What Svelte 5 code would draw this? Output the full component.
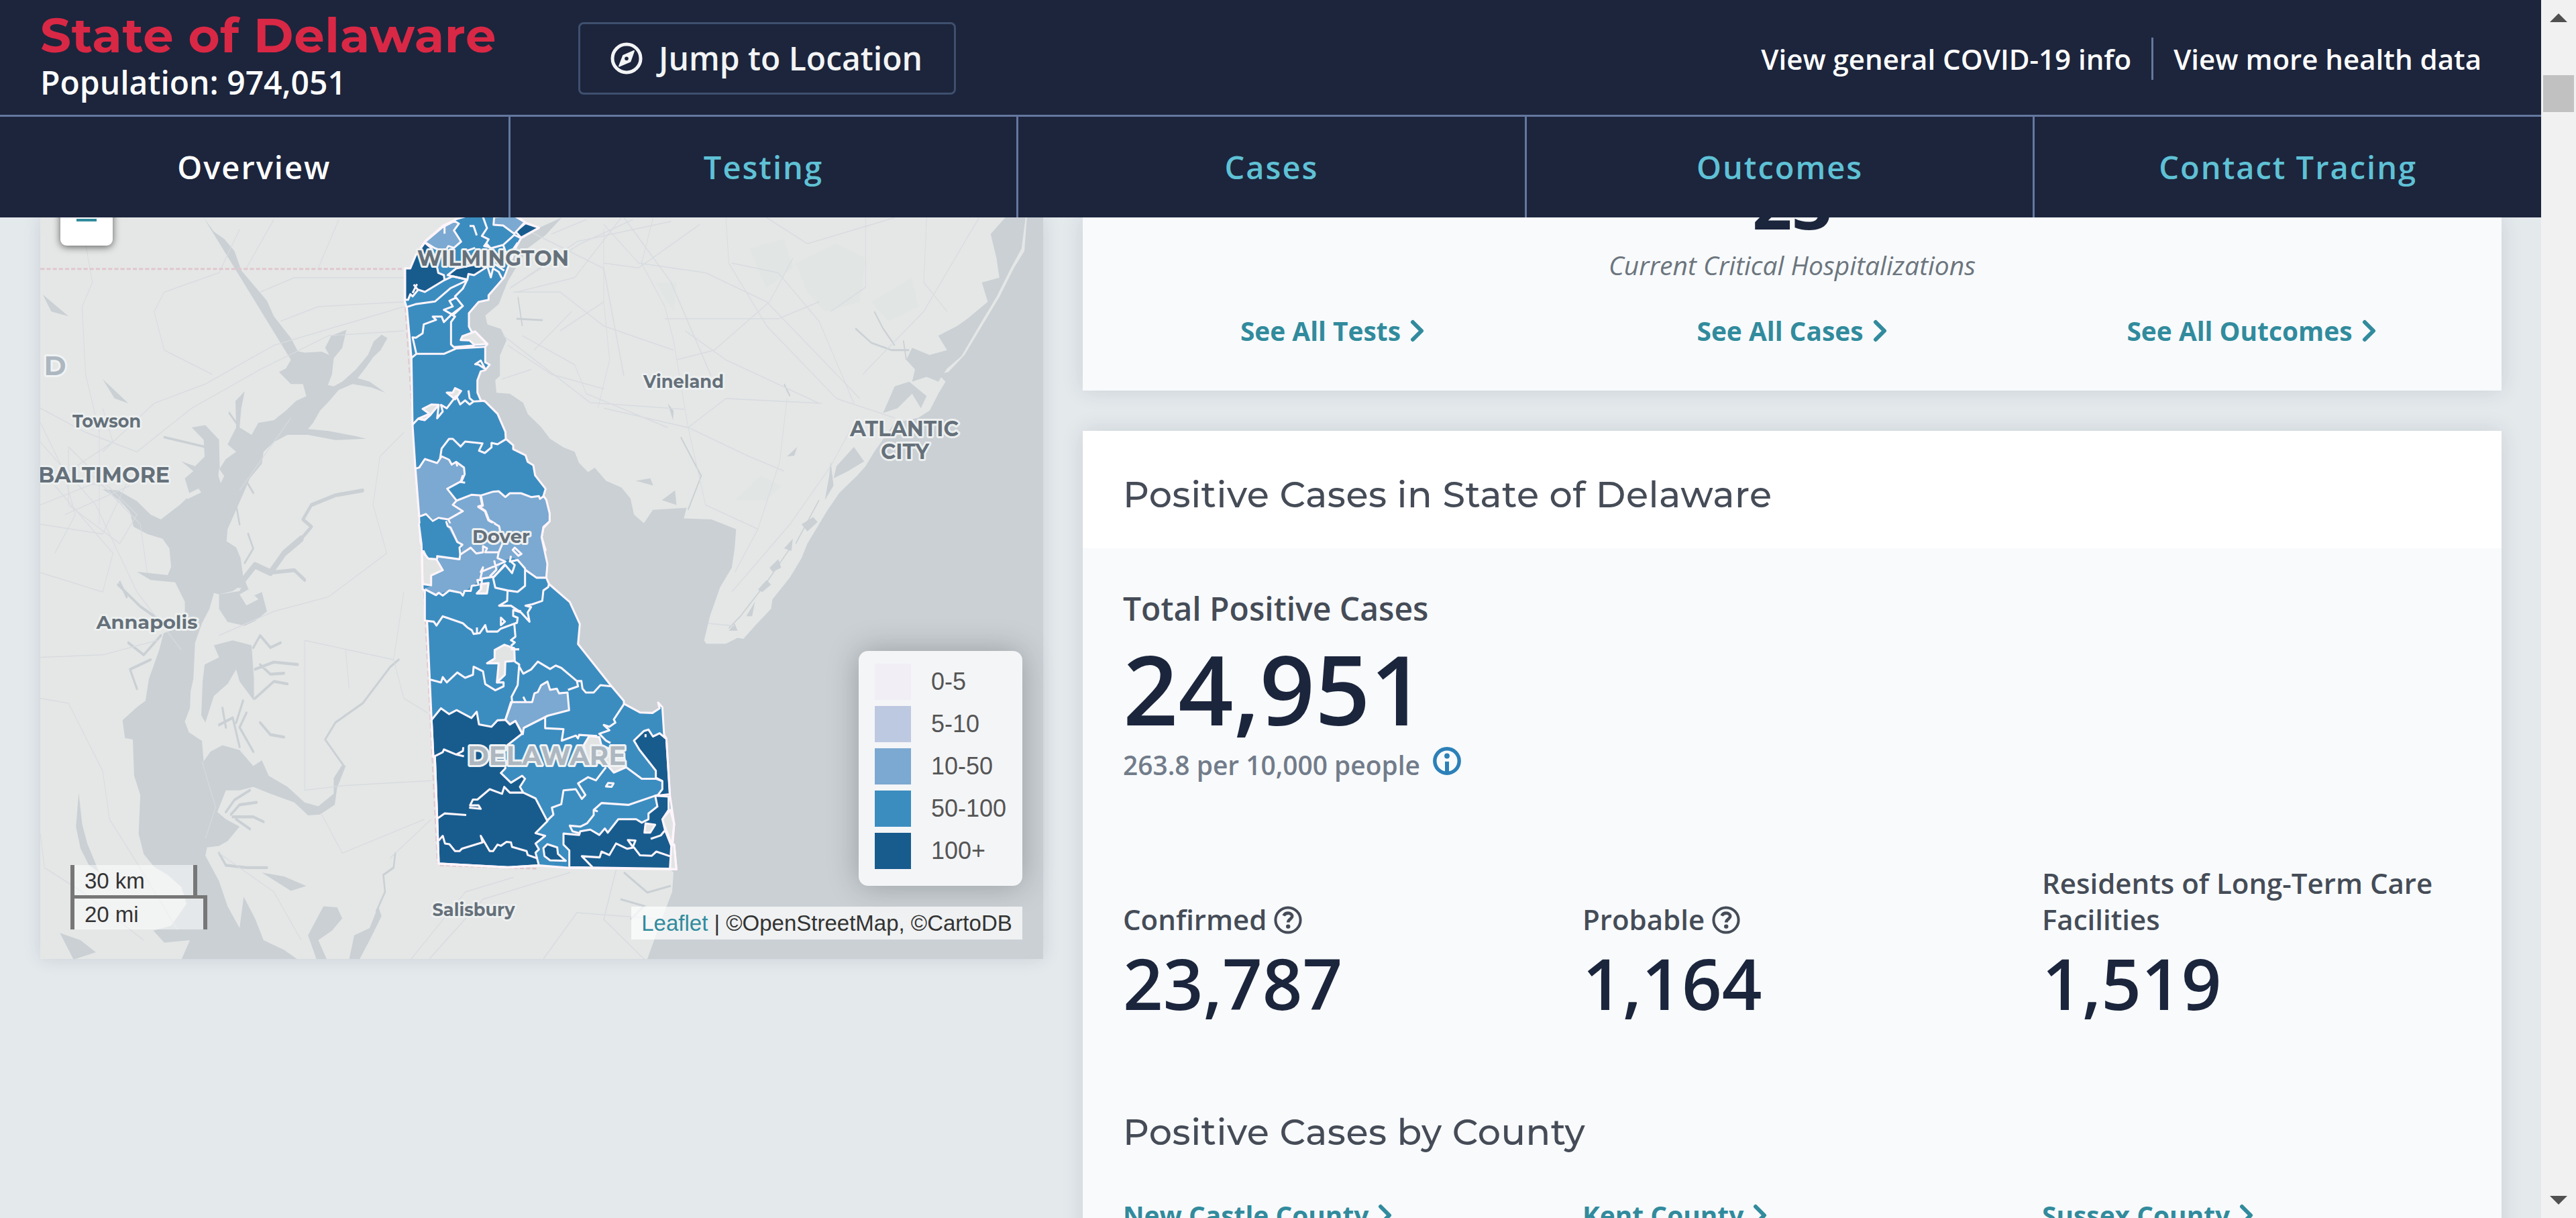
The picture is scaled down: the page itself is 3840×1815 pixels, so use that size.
<script>
  const tabs = ['Overview', 'Testing', 'Cases', 'Outcomes', 'Contact Tracing'];
  const summaryLinks = ['See All Tests', 'See All Cases', 'See All Outcomes'];
  const stats = [
    { label: 'Confirmed', value: '23,787', help: true },
    { label: 'Probable', value: '1,164', help: true },
    { label: 'Residents of Long-Term Care Facilities', value: '1,519', help: false }
  ];
  const counties = ['New Castle County', 'Kent County', 'Sussex County'];
  const legend = [
    { label: '0-5', tone: 't0' },
    { label: '5-10', tone: 't1' },
    { label: '10-50', tone: 't2' },
    { label: '50-100', tone: 't3' },
    { label: '100+', tone: 't4' }
  ];
</script>

{#snippet chevron()}
  <svg class="chevron" viewBox="0 0 22 34"><path d="M4 4 L17 17 L4 30" /></svg>
{/snippet}

<div class="screen">
  <div class="page">
    <header>
      <div class="top">
        <div class="place">
          <h1>State of Delaware</h1>
          <p>Population: 974,051</p>
        </div>
        <button class="jump">
          <svg viewBox="0 0 48 48">
            <circle cx="24" cy="24" r="21" fill="none" stroke="#f3f4f5" stroke-width="5" />
            <path fill="#f3f4f5" stroke="#f3f4f5" stroke-width="2" stroke-linejoin="round" d="M35 13 L29.5 28.5 L13 35.5 L19 20 Z" />
            <circle cx="24" cy="24.2" r="2.8" fill="#1c253c" />
          </svg>
          <span>Jump to Location</span>
        </button>
        <div class="links">
          <a class="info">View general COVID-19 info</a>
          <i></i>
          <a class="more">View more health data</a>
        </div>
      </div>
      <nav>
        {#each tabs as tab, i}
          <a class:active={i === 0}>{tab}</a>
        {/each}
      </nav>
    </header>

    <main>
      <section class="map">
        <svg class="tiles" viewBox="60 324 1495 1105" preserveAspectRatio="none">
          <rect x="60" y="324" width="1495" height="1105" fill="#e5e7e6" />

          <!-- Chesapeake Bay and its tributaries -->
          <g transform="translate(0 320) scale(.5102 .7207)">
            <g fill="#cad0d4">
              <path d="M595 6 L625 35 L655 50 L685 75 L705 115 L735 140 L780 178 L800 210 L850 255 L870 282 L890 285 L940 283 L962 290 L950 275 L968 250 L1012 238 L1000 275 L975 297 L970 330 L958 352 L975 355 L1000 345 L1040 320 L1075 290 L1092 262 L1115 248 L1132 255 L1112 280 L1090 295 L1070 315 L1045 338 L1080 345 L1126 368 L1085 357 L1030 350 L990 362 L958 388 L935 405 L915 430 L900 443 L960 447 L1040 458 L1070 463 L980 466 L900 455 L840 455 L800 470 L770 490 L765 515 L730 545 L715 570 L690 610 L665 650 L662 675 L690 688 L703 710 L710 745 L708 765 L680 778 L640 785 L625 782 L612 815 L590 845 L570 885 L565 960 L557 985 L555 1020 L540 1048 L552 1070 L590 1088 L595 1130 L615 1110 L650 1097 L700 1107 L740 1140 L765 1128 L785 1160 L840 1183 L890 1215 L930 1223 L975 1197 L975 1165 L1000 1137 L1010 1140 L985 1185 L978 1220 L935 1240 L900 1242 L860 1215 L790 1197 L740 1183 L700 1190 L660 1190 L635 1235 L660 1250 L700 1265 L665 1295 L640 1305 L605 1308 L600 1325 L640 1378 L665 1430 L700 1475 L712 1410 L745 1455 L770 1500 L830 1520 L870 1540 L530 1540 L555 1500 L480 1505 L448 1480 L500 1470 L545 1425 L530 1390 L490 1365 L450 1348 L420 1322 L405 1280 L410 1200 L392 1160 L388 1085 L365 1082 L358 1045 L400 1018 L425 1005 L435 960 L465 900 L478 865 L540 850 L540 800 L512 760 L440 755 L400 738 L490 745 L500 728 L495 690 L475 670 L430 660 L390 645 L380 615 L350 590 L300 568 L345 570 L400 592 L440 620 L470 630 L525 600 L555 580 L540 545 L565 530 L530 510 L570 520 L598 500 L595 465 L560 440 L600 435 L640 465 L642 525 L660 505 L690 490 L665 475 L690 440 L688 385 L715 365 L705 400 L700 440 L735 455 L755 430 L800 425 L835 405 L865 385 L895 375 L885 350 L850 350 L815 325 L835 318 L850 300 Z" />
              <path d="M592 965 L598 930 L640 915 L625 890 L680 880 L735 890 L742 960 L742 1005 L700 965 L690 940 L665 970 L625 995 L600 1050 L588 1035 Z" />
              <path d="M640 785 L700 778 L715 755 L735 790 L765 780 L780 820 L745 840 L715 850 L665 842 L640 815 Z" />
              <path d="M900 1490 L945 1430 L985 1432 L1000 1455 L970 1480 L930 1500 L955 1540 L925 1540 Z M1020 1540 L1035 1490 L1080 1475 L1105 1430 L1115 1450 L1080 1500 L1050 1540 Z M765 1360 L830 1368 L895 1388 L850 1398 Z" />
              <path d="M230 1195 L240 1260 L255 1300 L290 1360 L260 1345 L235 1310 L222 1265 Z M125 165 L200 210 L150 200 Z M300 340 L375 390 L335 380 Z M175 1485 L235 1500 L280 1525 L215 1540 Z" />
            </g>
            <g fill="none" stroke="#cad0d4" stroke-width="8" stroke-linejoin="round" stroke-linecap="round">
              <path stroke-width="14" d="M700 765 L745 725 L790 740 L830 700 L880 670" />
              <path d="M790 740 L860 735 L890 755 M880 670 L910 645 L885 630 L910 600 L980 580 L1060 570" />
              <path stroke-width="6" d="M740 895 L760 870 L790 895 L820 885 M745 940 L800 925 L870 930 M760 930 L790 950 L830 948 M745 1000 L800 965 L840 970 M700 1100 L680 1040 L640 1055 M740 1110 L700 1060 L720 1030 M760 1050 L790 1075 L830 1080 M660 1060 L650 1020 M690 1050 L710 1005" />
              <path stroke-width="5" d="M1005 1140 L950 1085 L980 1050 L1060 1010 L1140 935 L1165 920" />
              <path stroke-width="6" d="M470 870 L420 910 L375 885 M440 920 L380 940 L400 980 M470 840 L410 810 L345 765 M370 790 L350 760 M660 1235 L685 1210 L730 1190 M675 1240 L700 1220 L750 1215 M680 1245 L740 1245 L770 1255 M690 1250 L730 1270 M640 1320 L660 1345 L720 1350 L780 1350" />
              <path stroke-width="5" d="M1155 1320 L1150 1350 L1120 1365 L1125 1400 L1100 1440 M690 430 L670 410 M715 545 L740 575 M480 460 L600 480 M700 640 L690 600 M715 720 L740 690 L725 660" />
            </g>
            <g fill="#e5e7e6">
              <path d="M540 580 L580 566 L588 574 L548 588 Z M700 785 L725 775 L755 795 L720 808 Z M640 525 L655 540 L645 555 L638 540 Z" />
            </g>
            <g fill="none" stroke="#d8dbe0" stroke-width="2">
              <path d="M250 60 L270 140 L240 190 L250 330 L290 450 M118 400 L250 450 L400 490 L560 400 L760 320 L960 250 L1180 240 M300 490 L450 390 L600 350 L800 270 L1180 190 M118 540 L300 560 L410 640 L430 740 M118 470 L280 600 L400 780 L530 900 M118 640 L300 660 L380 540 M160 560 L330 700 L300 780 L118 740 M118 915 L300 910 L460 880 M118 1000 L200 1010 L300 1150 L320 1250 L400 1340 L520 1480 M700 570 L850 420 M450 200 L480 160 L640 120 L700 30 M450 200 L480 280 L620 330 M1180 450 L1110 500 L1090 600 L1130 700 L960 790 L800 820 L640 870 M890 880 L890 1190 M890 880 L1150 920 M720 110 L800 10 M760 160 L860 130 L1180 130 M820 220 L930 190 L1180 180 M930 110 L990 10 M890 1190 L1010 1180 L1260 1170 M940 1240 L1000 1320 L1240 1250 M1180 780 L1150 920 L1180 1000 L1250 1030 M118 1280 L130 1350 L240 1400 L420 1500 M640 1320 L800 1400 L880 1500 M1010 900 L1020 980 M1140 1330 L1260 1250 M590 1130 L630 1225 L600 1290 M1200 1540 L1360 1400 L1500 1370 M180 540 L330 470 L300 400 M118 430 L180 520 L220 620 L160 700" />
              <path d="M200 480 L400 620 L350 680 L200 600 Z M240 520 L360 600 M190 620 L380 560 M118 600 L330 540 M290 430 L290 640" />
            </g>
            <g fill="none" stroke="#dfc8ce" stroke-width="4" stroke-dasharray="12 6">
              <path d="M118 112 L1185 112 M1184 190 L1240 800 L1278 1340 M1285 1345 L1568 1352" />
            </g>
          </g>

          <!-- Delaware Bay and the Atlantic -->
          <path fill="#cad0d4" d="M838 324 L780 350 L750 400 L690 450 L700 560 L760 680 L790 780 L800 860 L840 970 L900 1030 L930 1060 L960 1100 L980 1280 L1004 1300 L1002 1329 L987 1368 L965 1429 H1555 V324 Z" />
          <g transform="translate(900 320) scale(.43365 .7207)">
            <path fill="#e5e7e6" d="M-138 2 L-200 42 L-261 69 L-308 116 L-331 139 L-361 185 L-407 208 L-400 227 L-354 236 L-334 259 L-357 291 L-357 333 L-373 342 L-369 368 L-323 370 L-277 389 L-261 412 L-215 439 L-185 463 L-138 481 L-100 490 L-85 513 L-54 532 L-31 523 L8 550 L61 564 L92 587 L104 620 L138 638 L169 610 L285 606 L275 628 L370 630 L455 650 L450 690 L440 730 L400 770 L365 830 L345 880 L352 887 L420 887 L460 875 L480 877 L520 850 L575 815 L580 795 L640 750 L680 710 L700 680 L770 610 L810 575 L870 540 L900 520 L930 490 L1000 430 L1080 420 L1120 405 L1150 370 L1175 345 L1150 330 L1185 325 L1240 290 L1300 230 L1360 170 L1410 110 L1446 75 L1455 2 Z" />
            <g fill="#cad0d4">
              <path d="M1380 6 L1330 40 L1350 90 L1360 130 L1300 140 L1320 180 L1250 215 L1215 230 L1150 250 L1180 280 L1120 290 L1060 275 L1040 300 L1070 320 L1060 345 L1110 335 L1150 345 L1180 318 L1230 292 L1290 230 L1350 170 L1400 110 L1436 70 L1450 6 Z" />
              <path d="M1050 345 L1000 355 L960 410 L1010 400 L1060 370 L1090 400 L1110 375 Z M800 520 L860 480 L895 510 L840 530 L790 545 Z M680 640 L720 625 L735 635 L700 655 Z M620 690 L650 670 L645 695 Z M570 730 L600 712 L610 730 L580 738 Z M530 775 L560 755 L575 765 L545 780 Z M490 830 L520 800 L510 830 Z M430 860 L450 845 L460 860 Z" />
              <path d="M780 510 L790 560 L760 590 L775 540 Z M200 590 L245 570 L250 600 Z M110 550 L160 545 L170 560 Z M220 390 L240 405 L238 425 Z M630 500 L665 480 L655 498 Z" />
            </g>
            <g fill="none" stroke="#cad0d4" stroke-width="4">
              <path d="M865 235 L920 265 L990 280 L1050 280 M930 200 L960 235 L1000 270 M1030 260 L1040 300 M265 460 L300 500 L335 540 L290 610 M620 350 L640 375 M-295 170 L-280 230 M-300 215 L-210 218" />
              <path d="M640 690 L560 760 L470 830 L430 855 M740 590 L660 680" stroke-width="3" />
            </g>
            <g fill="#dce2e0" opacity=".45">
              <path d="M500 70 L620 50 L650 110 L560 150 Z M660 100 L800 60 L900 90 L880 180 L760 200 L700 160 Z M450 590 L540 540 L610 560 L560 590 Z M920 180 L1060 130 L1080 190 L980 220 Z M180 140 L250 140 L240 200 Z" />
            </g>
            <g fill="none" stroke="#d8dbe0" stroke-width="2.2">
              <path d="M170 6 L130 100 L210 190 L240 260 L290 440 L350 600 L530 650 M0 20 L120 100 L350 120 L560 180 L880 380 M420 6 L430 100 L560 230 L800 380 L1000 420 M0 100 L120 110 L330 20 M210 215 L600 215 L740 180 M280 240 L420 300 L740 390 M240 280 L0 230 M250 300 L380 280 L570 180 L650 90 M900 6 L900 150 L780 200 M890 330 L1100 200 L1290 6 M1110 6 L1100 140 L1180 200 M560 6 L700 60 L1000 6 M440 100 L600 120 L740 220 M740 220 L860 390 M630 380 L605 510 L530 650 L450 740 M290 440 L500 500 L620 530 M290 440 L420 380 L750 390 M0 400 L290 440 M440 780 L640 640 L780 520 L870 420 M360 845 L450 850 M-320 150 L-80 60 L100 10 M-310 160 L-150 160 L0 230 M-330 270 L-180 330 L0 360 M-280 250 L-100 310 L-60 370 L220 440 M-350 340 L-250 320 M-180 40 L-60 10 M0 30 L0 180 L20 300 L-20 400 M-150 240 L0 180 M60 6 L-100 130 L-300 160 M-240 280 L-110 200" />
            </g>
          </g>
          <g fill="none" stroke="#d8dbe0" stroke-width="1.5">
            <path d="M930 324 L1000 420 L1060 560 M780 340 L900 400 L930 560 M760 430 L860 360 L1000 330 M750 500 L880 600 L1020 610 M640 1429 L720 1340 L850 1300 M920 1290 L900 1370 L960 1429 M810 1429 L860 1360 L990 1370" />
          </g>
          <path d="M930 1300 L965 1330 L1000 1320 M925 1340 L960 1350 L940 1370" fill="none" stroke="#cad0d4" stroke-width="3" />

          <!-- Upper ZIP areas -->
          <g transform="translate(580 320) scale(.33333)" stroke="#fff5fb" stroke-width="9" stroke-linejoin="round">
            <path fill="#3b8dc0" d="M95 240 L70 240 L70 385 L80 420 L100 640 L105 940 L118 1140 L135 1350 L140 1460 L150 1500 L700 1500 L682 1440 L690 1400 L718 1370 L718 1335 L703 1275 L690 1258 L700 1225 L653 1165 L645 1120 L620 1105 L610 1075 L555 1048 L555 1030 L522 1002 L520 970 L485 890 L430 835 L410 830 L395 795 L395 740 L410 700 L430 695 L450 670 L430 660 L430 590 L440 578 L385 522 L370 525 L357 500 L357 440 L400 390 L445 380 L445 360 L515 280 L530 240 L570 140 L590 105 L670 58 L610 35 L550 -10 L400 -10 L300 20 L240 50 L160 120 L120 180 Z" />
            <path fill="#185c8e" d="M72 240 L95 240 L120 180 L160 125 L190 150 L205 190 L220 260 L245 270 L248 292 L160 345 L130 335 L105 365 L95 355 L85 380 L72 380 Z M262 270 L300 240 L400 220 L440 232 L380 270 L355 265 L350 290 L285 275 Z M565 75 L610 38 L670 58 L590 102 Z M425 140 L435 128 L450 145 Z" />
            <path fill="#7ba9d1" d="M160 122 L240 55 L292 28 L312 40 L290 70 L322 120 L290 148 L265 140 L250 165 L205 150 Z M467 45 L470 10 L560 5 L607 33 L560 85 L510 48 Z" />
            <path fill="#7ba9d1" d="M118 1135 L135 1130 L160 1092 L215 1110 L235 1080 L268 1095 L280 1117 L300 1105 L335 1130 L338 1160 L325 1190 L260 1225 L302 1278 L330 1325 L265 1362 L222 1355 L195 1370 L165 1338 L135 1350 Z" />
            <path fill="#7ba9d1" d="M302 1278 L368 1252 L410 1255 L465 1238 L490 1236 L520 1262 L540 1245 L590 1245 L635 1262 L670 1258 L675 1270 L692 1258 L703 1275 L718 1335 L718 1370 L690 1400 L682 1440 L692 1500 L320 1500 L330 1475 L305 1455 L265 1362 L330 1325 L285 1297 Z" />
            <path fill="#e2e4e4" d="M385 522 L438 578 L382 582 L360 562 L320 560 L328 543 Z M258 795 L285 795 L295 775 L322 788 L295 825 Z M150 868 L190 848 L222 850 L185 895 L160 918 L130 912 L180 890 Z" />
            <g fill="none">
              <path d="M80 412 L118 400 L205 388 L275 328 L335 300 L345 290 M248 292 L285 275 L350 290 L330 330 L295 365 L330 408 L280 445 L245 425 L285 410 L270 385 L300 370 M280 445 L245 480 L235 455 L195 455 L210 470 L155 490 L150 530 L120 550 L105 548 L122 622 L100 640 M122 622 L245 622 L300 598 L430 590 M330 408 L285 450 L295 455 L277 480 L277 580 L290 592 L382 584" />
              <path d="M248 50 V85 M360 50 L378 50 L392 92 M420 10 L438 60 L415 95 L445 110 L430 135 L455 150 L510 135 L560 90 L590 105 M510 135 L530 190 L575 125 M350 160 L385 148 M440 232 L455 280 L465 240 L490 255 L505 285 M465 215 L515 250" />
              <path d="M385 668 L410 652 L430 690 L400 670 Z M105 938 L130 912 L160 918 M222 850 L215 910 L240 880 L232 850 L258 865 L300 810 L318 848 L340 830 L360 848 L378 835 L430 832 M355 785 L360 820 L378 835" />
              <path d="M228 1090 L235 1045 L268 1002 L285 1002 L320 1036 L340 1014 L418 1022 L402 1055 L428 1065 L458 1040 L458 1020 L485 1026 L522 1004 M300 1105 L305 1125 M330 1165 L320 1195 L340 1198" />
              <path stroke-width="12" d="M410 1258 L418 1300 L400 1305 L430 1325 L445 1365 L490 1392" />
              <path d="M105 350 L125 310 M110 312 L128 335" />
            </g>
            <path fill="#3b8dc0" stroke="none" d="M139 1352 L165 1345 L195 1374 L222 1359 L262 1375 L305 1460 L326 1478 L310 1500 L150 1500 L144 1460 Z" />
          </g>

          <!-- Lower ZIP areas -->
          <g transform="translate(580 780) scale(.33333 .34435)" stroke="#fff5fb" stroke-width="9" stroke-linejoin="round">
            <path fill="#3b8dc0" stroke="none" d="M133 0 L145 90 L175 150 L150 285 L160 290 L160 420 L170 422 L182 680 L190 850 L198 1010 L205 1012 L215 1270 L222 1472 L530 1488 L670 1480 L800 1490 L1258 1495 L1255 1170 L1240 930 L1230 915 L1222 795 L1203 775 L1210 800 L1178 820 L1122 818 L1050 780 L1050 768 L995 705 L845 522 L853 435 L808 340 L715 262 L703 235 L708 175 L682 60 L690 15 L706 0 Z" />
            <path fill="#7ba9d1" stroke="none" d="M258 -1 L262 15 L300 80 L326 92 L320 135 L315 155 L215 145 L242 202 L188 228 L188 272 L160 280 L210 310 L270 290 L335 298 L365 275 L420 240 L470 225 L510 160 L560 150 L605 195 L660 235 L700 235 L708 175 L682 60 L690 15 L707 -1 Z" />
            <path fill="#7ba9d1" d="M545 773 L640 773 L650 735 L665 730 L680 700 L708 684 L720 720 L750 715 L760 735 L798 732 L805 808 L710 832 L602 885 L598 912 L565 855 L540 870 L520 850 Z" />
            <path fill="#e2e4e4" d="M147 120 L175 152 L212 155 L240 202 L188 225 L188 268 L150 262 Z M410 262 L445 258 L438 303 L392 303 L410 285 Z M472 548 L515 525 L560 540 L562 595 L520 598 L518 655 L482 688 L490 605 L438 605 L472 585 Z M870 960 L895 920 L940 925 L950 960 L1050 1000 L1060 1055 L1005 1078 L970 1040 L890 1030 Z M1220 1280 L1258 1240 L1275 1300 L1265 1390 Z M1145 1290 L1190 1300 L1170 1340 L1142 1340 Z M1258 1395 L1275 1390 L1285 1497 L1256 1495 Z M320 1230 L358 1230 L345 1262 L318 1240 Z" />
            <path fill="#185c8e" d="M190 850 L232 800 L268 825 L302 808 L368 842 L392 815 L402 870 L458 880 L485 852 L520 850 L540 870 L565 855 L595 910 L515 970 L520 1060 L500 1080 L545 1122 L595 1092 L608 1105 L585 1140 L600 1165 L655 1190 L708 1288 L655 1340 L698 1352 L655 1385 L670 1410 L655 1425 L670 1480 L530 1488 L222 1472 L215 1270 L205 1012 L198 1010 Z" />
            <path fill="#185c8e" d="M1095 940 L1140 898 L1160 892 L1180 922 L1210 908 L1240 932 L1256 1172 L1200 1178 L1222 1150 L1222 1115 L1193 1100 L1193 1070 L1120 980 Z" />
            <path fill="#185c8e" d="M1190 1178 L1250 1182 L1250 1240 L1222 1280 L1235 1330 L1262 1395 L1256 1494 L806 1488 L806 1415 L780 1390 L780 1342 L850 1348 L855 1332 L900 1325 L940 1348 L965 1320 L978 1338 L1025 1280 L1105 1280 L1130 1295 L1160 1280 L1160 1255 L1200 1225 Z" />
            <path fill="#185c8e" d="M690 1405 L708 1388 L752 1402 L755 1430 L790 1460 L720 1458 L695 1440 Z" />
            <path fill="#e2e4e4" d="M1147 1298 L1190 1304 L1168 1338 L1142 1338 Z" />
            <g fill="none">
              <path d="M133 0 L145 90 L150 285 L160 290 L160 420 L170 422 L182 680 L190 850 L198 1010 L205 1012 L215 1270 L222 1472 L530 1488 L670 1480 L800 1490 L1285 1497 L1275 1390 L1268 1390 L1275 1300 L1255 1170 L1240 930 L1230 915 L1222 795 L1203 775 L1210 800 L1178 820 L1122 818 L1050 780 L1050 768 L995 705 L845 522 L853 435 L808 340 L715 262 L703 235 L708 175 L682 60 L690 15 L715 -6" />
              <path d="M255 -10 L262 12 L275 18 L305 80 L328 92 L315 105 L318 135 L365 105 L390 130 L420 125 L420 98 L438 108 L430 125 L490 125 L508 85 L492 12 L470 0 M318 135 L315 155 L215 142 L215 155 M490 125 L485 150 L520 165 L410 210 L420 190 L408 240 L470 230 L520 175 M470 160 L480 200 L450 230" />
              <path d="M545 140 L540 165 L575 158 L608 195 L608 270 L575 296 L530 290 L475 278 L465 235 L520 180 L550 215 L562 180 L540 160 M608 200 L660 235 L703 235 M562 105 L592 132 L578 140 L553 115 Z" />
              <path d="M160 285 L210 310 L222 300 L240 312 L270 290 L320 300 L330 312 L338 292 L365 292 L370 270 L400 265 L395 245 L415 245 L412 285 M530 290 L528 335 L492 356 L545 356 L590 385 L628 425 L620 385 L635 362 L610 356 L640 350 L685 335 L690 290 L712 275 L715 262 M555 375 L590 385 M590 380 L555 375 L555 400 L575 408 L572 430 L500 455 L485 468 L438 468 L430 440 L405 475 L378 478 L370 462 L350 450 L330 432 L265 410 L240 402 L212 442 L200 425 L170 422 M500 408 V440 L518 425 Z M393 450 V475" />
              <path d="M560 435 L565 490 L545 505 L562 515 L545 530 M545 545 L582 545 M182 675 L232 688 L240 665 L258 688 L305 645 L340 668 L375 655 L378 620 L420 640 L430 695 L475 722 L512 705 L512 688 L482 688 M562 598 L582 610 L575 700 L548 750 L550 770 L520 850 M582 620 L600 650 L635 632 L665 598 L720 630 L745 615 L770 625 L840 682 L845 705 L800 720 M600 750 L612 773 M840 682 L860 682 L865 715 L880 732 L915 732 L945 700 L995 705 M698 836 L698 886 L780 890 L772 940 L835 918 L845 930 L850 915 L930 920 M1050 782 L1005 848 L1012 862 L985 880 L960 872 L985 895 L940 910 L970 940 L990 950" />
              <path d="M1060 1055 L1130 1105 L1195 1105 L1222 1115 M970 1055 L950 1080 L925 1112 L890 1098 L845 1125 L878 1175 L862 1192 L835 1150 L780 1155 L770 1215 L728 1230 L735 1260 L708 1285 M1200 1175 L1070 1218 L950 1210 L915 1240 L930 1245 L915 1240 L915 1262 L885 1298 L855 1312 L808 1308 L820 1332 L850 1340 M980 1123 L1004 1125 L995 1140 L970 1138 Z M1147 912 V925" />
              <path d="M198 1010 L240 990 L245 978 L300 1000 L330 985 L332 968 M300 1000 L335 1008 M215 1278 L248 1255 L345 1262 M358 1230 L410 1235 L400 1220 L362 1220 L375 1195 L395 1195 L450 1150 L505 1170 L515 1140 L540 1165 L600 1165 M222 1372 L240 1352 L250 1385 L270 1388 L295 1418 L315 1418 L325 1408 L418 1380 L410 1352 L450 1418 L465 1418 L485 1390 L500 1395 L525 1378 L545 1380 L550 1400 L615 1418 L620 1435 L665 1450" />
              <path d="M910 1488 L862 1440 L942 1445 L950 1420 L985 1435 L1015 1385 L1065 1408 L1095 1402 L1122 1436 L1175 1438 L1195 1420 L1256 1440 M1068 1370 L1102 1372 L1090 1400 Z M1170 1365 L1215 1350 L1232 1330" />
            </g>
          </g>

          <g class="names" text-anchor="middle">
            <text class="city big" x="735" y="396" textLength="226" lengthAdjust="spacingAndGlyphs">WILMINGTON</text>
            <text class="city" x="1019" y="578" textLength="120" lengthAdjust="spacingAndGlyphs">Vineland</text>
            <text class="city big" x="1348" y="650" textLength="162" lengthAdjust="spacingAndGlyphs">ATLANTIC</text>
            <text class="city big" x="1349" y="684" textLength="72" lengthAdjust="spacingAndGlyphs">CITY</text>
            <text class="city" x="159" y="637" textLength="102" lengthAdjust="spacingAndGlyphs">Towson</text>
            <text class="city big" x="155" y="719" textLength="196" lengthAdjust="spacingAndGlyphs">BALTIMORE</text>
            <text class="city" x="219" y="937" textLength="151" lengthAdjust="spacingAndGlyphs">Annapolis</text>
            <text class="city" x="747" y="809" textLength="86" lengthAdjust="spacingAndGlyphs">Dover</text>
            <text class="city" x="706" y="1365" textLength="123" lengthAdjust="spacingAndGlyphs">Salisbury</text>
            <text class="region" x="815" y="1140" textLength="236" lengthAdjust="spacingAndGlyphs">DELAWARE</text>
            <text class="region" x="82" y="559">D</text>
          </g>
        </svg>

        <div class="zoom"><i></i></div>
        <div class="scale">
          <span class="km">30 km</span>
          <span class="mi">20 mi</span>
        </div>
        <ul class="legend">
          {#each legend as row}
            <li><i class={row.tone}></i><span>{row.label}</span></li>
          {/each}
        </ul>
        <p class="credit"><span>Leaflet</span> | ©OpenStreetMap, ©CartoDB</p>
      </section>

      <div class="column">
        <section class="card summary">
          <strong>23</strong>
          <em>Current Critical Hospitalizations</em>
          <div class="three">
            {#each summaryLinks as text}
              <a class="go">{text}{@render chevron()}</a>
            {/each}
          </div>
        </section>

        <section class="card cases">
          <h2>Positive Cases in State of Delaware</h2>
          <div class="body">
            <h3>Total Positive Cases</h3>
            <div class="total">24,951</div>
            <div class="rate">
              <span>263.8 per 10,000 people</span>
              <svg viewBox="0 0 42 42">
                <circle cx="21" cy="21" r="18.2" fill="none" stroke="#2c80b8" stroke-width="5.4" />
                <circle cx="21" cy="13.5" r="3.9" fill="#2c80b8" />
                <rect x="18" y="21.8" width="6" height="17" fill="#2c80b8" />
              </svg>
            </div>
            <div class="stats">
              {#each stats as stat}
                <div class="stat">
                  <div class="label">
                    <span>{stat.label}</span>
                    {#if stat.help}
                      <svg viewBox="0 0 42 42">
                        <circle cx="21" cy="21" r="18.6" fill="none" stroke="#454c57" stroke-width="4" />
                        <path d="M14.6 14.6 C16 11.4 18.4 10.6 21.2 10.6 C24.6 10.6 27.2 12.6 27.2 15.6 C27.2 19.4 21.2 19.6 21.2 24.6" fill="none" stroke="#454c57" stroke-width="4.6" />
                        <circle cx="21.2" cy="30.6" r="3.2" fill="#454c57" />
                      </svg>
                    {/if}
                  </div>
                  <b>{stat.value}</b>
                </div>
              {/each}
            </div>
            <h2 class="by">Positive Cases by County</h2>
            <div class="counties">
              {#each counties as county}
                <a class="go">{county}{@render chevron()}</a>
              {/each}
            </div>
          </div>
        </section>
      </div>
    </main>
  </div>

  <aside class="scrollbar">
    <svg class="arrow" viewBox="0 0 26 13"><path d="M0 13 L13 0 L26 13 Z" /></svg>
    <div class="thumb"></div>
    <svg class="arrow down" viewBox="0 0 26 13"><path d="M0 0 L26 0 L13 13 Z" /></svg>
  </aside>
</div>

<style>
  :global(body) { margin: 0; overflow: hidden; }
  .screen {
    display: flex;
    width: 3840px;
    height: 1815px;
    overflow: hidden;
    background: #e4e9ec;
    font-family: 'Open Sans', sans-serif;
    color: #1b253c;
  }
  h1, h2, h3, p, ul { margin: 0; padding: 0; font-weight: 400; }
  .page { width: 3788px; display: flex; flex-direction: column; }

  header { flex: none; height: 324px; background: #1c253c; color: #fff; }
  .top { display: flex; height: 171px; border-bottom: 3px solid #64779f; }
  .place { flex: none; width: 862px; padding: 16px 0 0 60px; box-sizing: border-box; white-space: nowrap; }
  h1 {
    font: 700 72px/72px Montserrat, Inter, sans-serif;
    color: #d92845;
    letter-spacing: .7px;
  }
  .place p { margin-top: 3px; font-weight: 600; font-size: 48px; line-height: 64px; }
  .jump {
    display: flex;
    align-items: center;
    gap: 24px;
    width: 563px;
    height: 108px;
    margin: 33px 0 0 0;
    padding: 0 0 0 45px;
    border: 3px solid #3f4f6e;
    border-radius: 8px;
    background: none;
    color: #f3f4f5;
    font: 600 48px/64px 'Open Sans', sans-serif;
    white-space: nowrap;
  }
  .jump svg { width: 48px; height: 48px; flex: none; }
  .links {
    display: flex;
    align-items: center;
    margin-left: auto;
    padding: 4px 89px 0 0;
    font-size: 42px;
    font-weight: 600;
    white-space: nowrap;
  }
  .links i { width: 3px; height: 63px; margin: 0 30px; background: #64779f; }
  nav { display: grid; grid-template-columns: repeat(5, 1fr); height: 150px; }
  nav a {
    border-left: 3px solid #64779f;
    color: #5fc1d5;
    font-size: 47px;
    font-weight: 600;
    line-height: 150px;
    letter-spacing: 2px;
    text-align: center;
  }
  nav a:first-child { border-left: 0; }
  nav a.active { color: #fff; }

  main { flex: 1; display: flex; align-items: flex-start; gap: 59px; min-height: 0; padding-left: 60px; overflow: hidden; }
  .map { position: relative; width: 1495px; height: 1105px; box-shadow: 0 0 24px rgba(30, 50, 80, .13); }
  .tiles { display: block; width: 1495px; height: 1105px; overflow: hidden; }
  .names text { paint-order: stroke; stroke: #edf0f0; stroke-width: 6px; stroke-linejoin: round; font-family: Montserrat, Inter, sans-serif; }
  .city { font-size: 27px; font-weight: 700; fill: #65707a; }
  .city.big { font-size: 33px; }
  .names .region { font-size: 40px; font-weight: 700; fill: #adb7c0; stroke: #f0f3f4; }
  .zoom {
    position: absolute; top: -20px; left: 30px; width: 78px; height: 62px;
    border-radius: 0 0 9px 9px; background: #fff; box-shadow: 0 2px 12px rgba(0, 0, 0, .6);
  }
  .zoom i { display: block; width: 30px; height: 4px; margin: 22px auto 0; background: #318b9d; }
  .scale { position: absolute; left: 45px; bottom: 44px; font: 33px/47px 'Liberation Sans', sans-serif; color: #333; }
  .scale span { display: block; box-sizing: border-box; padding-left: 15px; border: 0 solid #777; background: rgba(255, 255, 255, .5); }
  .scale .km { width: 189px; height: 45px; border-width: 0 6px; }
  .scale .mi { width: 204px; height: 51px; border-width: 5px 6px 0; }
  .legend {
    position: absolute; right: 31px; bottom: 109px; width: 244px; height: 350px;
    box-sizing: border-box; padding: 14px 0 0 24px; border-radius: 14px; list-style: none;
    background: #f4f5f7; box-shadow: 0 0 46px rgba(0, 0, 0, .25);
    font: 36px/63px 'Liberation Sans', sans-serif; color: #555;
  }
  .legend li { display: flex; align-items: center; gap: 30px; height: 63px; }
  .legend i { width: 54px; height: 54px; }
  .t0 { background: #f1eef6; }
  .t1 { background: #bdc9e1; }
  .t2 { background: #7ba9d1; }
  .t3 { background: #3b8dc0; }
  .t4 { background: #185c8e; }
  .credit {
    position: absolute; right: 31px; bottom: 29px; width: 583px; height: 49px;
    background: rgba(255, 255, 255, .7); color: #333; text-align: center; white-space: nowrap;
    font: 33px/49px 'Liberation Sans', sans-serif;
  }
  .credit span { color: #318b9d; }

  .column { width: 2115px; }
  .card { background: #f8fafc; box-shadow: 0 0 30px rgba(30, 50, 60, .13); }
  .summary { display: flex; flex-direction: column; align-items: center; height: 258px; }
  .summary strong { margin-top: -74px; font-size: 104px; line-height: 104px; }
  .summary em { margin-top: 14px; font-size: 39px; line-height: 54px; color: #6c757d; }
  .three { display: grid; grid-template-columns: repeat(3, 685px); margin-top: 44px; }
  .go { display: flex; align-items: center; gap: 14px; font-size: 38.9px; font-weight: 700; line-height: 54px; color: #318b9d; white-space: nowrap; }
  .three .go { justify-content: center; }
  .chevron { width: 22px; height: 34px; fill: none; stroke: #318b9d; stroke-width: 6; stroke-linecap: round; stroke-linejoin: round; }
  .cases { margin-top: 60px; height: 1300px; }
  h2 {
    height: 175px; box-sizing: border-box; padding: 65px 60px 0;
    background: #fff; color: #454c57; white-space: nowrap;
    font: 500 54px/60px Montserrat, Inter, sans-serif; letter-spacing: .5px;
  }
  .body { padding: 60px 60px 0; }
  h3 { font-size: 48px; font-weight: 600; line-height: 60px; color: #454c57; }
  .total { margin-top: 16px; font-size: 144px; line-height: 144px; font-weight: 600; }
  .rate { display: flex; gap: 19px; margin-top: 16px; font-size: 38.9px; line-height: 54px; font-weight: 600; color: #727c8a; }
  .rate svg { width: 42px; height: 42px; }
  .stats { display: grid; grid-template-columns: repeat(3, 625px); column-gap: 60px; margin-top: 122px; }
  .label { display: flex; align-items: flex-end; gap: 11px; height: 108px; color: #454c57; font-size: 42px; font-weight: 600; line-height: 54px; }
  .label svg { width: 42px; height: 42px; margin-bottom: 5px; }
  .stat b { display: block; margin-top: 16px; font-size: 104.5px; line-height: 104px; font-weight: 600; }
  h2.by { height: 60px; margin-top: 140px; padding: 0; background: none; }
  .counties { display: grid; grid-template-columns: repeat(3, 625px); column-gap: 60px; margin-top: 67px; }

  .scrollbar { display: flex; flex-direction: column; align-items: center; width: 52px; background: #f1f1f1; }
  .arrow { width: 26px; height: 13px; margin-top: 20px; fill: #505050; }
  .thumb { width: 46px; height: 55px; margin-top: 79px; background: #c1c1c1; }
  .arrow.down { margin: auto 0 20px; }
</style>
